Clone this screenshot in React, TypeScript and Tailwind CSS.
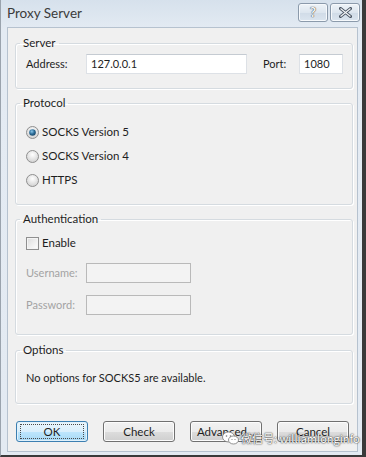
import React from 'react';

// Win7-style "Proxy Server" dialog

const font = "font-['Lato','Open_Sans',sans-serif]";

const Radio = ({ checked }: { checked?: boolean }) => (
    <svg width="13" height="13" viewBox="0 0 13 13" className="shrink-0">
        <defs>
            <radialGradient id="rbg" cx="50%" cy="35%" r="60%">
                <stop offset="0%" stopColor="#ffffff" />
                <stop offset="100%" stopColor="#d4d4d4" />
            </radialGradient>
            <radialGradient id="dot" cx="40%" cy="35%" r="65%">
                <stop offset="0%" stopColor="#8ac6ea" />
                <stop offset="60%" stopColor="#2a6b96" />
                <stop offset="100%" stopColor="#1b4a6c" />
            </radialGradient>
        </defs>
        <circle cx="6.5" cy="6.5" r="6" fill="url(#rbg)" stroke="#8f8f8f" />
        {checked && <circle cx="6.5" cy="6.5" r="3.3" fill="url(#dot)" />}
    </svg>
);

const GroupBox = ({ title, className, children }: { title: string, className?: string, children: React.ReactNode }) => (
    <fieldset className={`mx-0 border border-[#d5dbe0] rounded-[3px] shadow-[inset_1px_1px_0_#ffffff,1px_1px_0_#ffffff] ${className}`}>
        <legend className="ml-[4px] px-[3px] text-[11.5px] leading-[16px] text-[#1e1e1e]">{title}</legend>
        {children}
    </fieldset>
);

const Button = ({ label, focused }: { label: string, focused?: boolean }) => (
    <button
        className={`w-[72px] h-[21px] rounded-[3px] border text-[11.5px] leading-none text-[#1e1e1e] flex items-center justify-center ${
            focused
                ? 'border-[#3c7fb1] bg-[linear-gradient(#eaf6fd,#d9effc_50%,#bee6fd_51%,#a7d9f5)] shadow-[inset_0_0_0_1px_#e0f1fb]'
                : 'border-[#707070] bg-[linear-gradient(#f2f2f2,#ebebeb_50%,#dddddd_51%,#cfcfcf)] shadow-[inset_0_0_0_1px_#fcfcfc]'
        }`}
    >
        {focused ? (
            <span className="w-[64px] h-[15px] border border-dotted border-[#4a4a4a] flex items-center justify-center">{label}</span>
        ) : label}
    </button>
);

const TitleButton = ({ children }: { children: React.ReactNode }) => (
    <div className="w-[30px] h-[19px] rounded-[3px] border border-[#8b9aab] bg-[linear-gradient(#eef3f8,#dde6ef_50%,#d0dbe7_51%,#dbe5ef)] shadow-[inset_0_0_0_1px_#f6f9fc] flex items-center justify-center">
        {children}
    </div>
);

export default function App() {
    return (
        <div className={`w-[366px] h-[457px] relative ${font} bg-[#dfe7f0]`}>
            <div className="w-full h-full flex flex-col border-l border-l-[#9aa3ad] border-r-[4px] border-r-[#3a3a3a] border-b-[2px] border-b-[#3a3a3a] bg-[linear-gradient(#d6e1ec,#e4ebf3_30px,#e3eaf2)]">
                {/* title bar */}
                <div className="h-[27px] shrink-0 flex items-start pl-[6px] pr-[2px]">
                    <span className="mt-[4px] text-[13.5px] leading-[18px] text-[#3b3b3b]">Proxy Server</span>
                    <div className="ml-auto mt-[3px] flex gap-[2px]">
                        <TitleButton>
                            <span className="text-[13px] leading-none font-bold text-[#f4f6f8] [text-shadow:0_0_1px_#404040,0_0_1px_#404040]">?</span>
                        </TitleButton>
                        <TitleButton>
                            <svg width="13" height="11" viewBox="0 0 13 11">
                                <path d="M1.5 1.5 L11.5 9.5 M11.5 1.5 L1.5 9.5" stroke="#4a5563" strokeWidth="3" strokeLinecap="square" />
                                <path d="M1.5 1.5 L11.5 9.5 M11.5 1.5 L1.5 9.5" stroke="#f4f6f8" strokeWidth="1.2" />
                            </svg>
                        </TitleButton>
                    </div>
                </div>

                {/* client area */}
                <div className="flex-1 ml-[6px] mr-[4px] mb-[3px] bg-[#f0f0f0] border border-[#b6c2cf] text-[11px] text-[#1e1e1e] pl-[7px] pr-[4px] flex flex-col">
                    <GroupBox title="Server" className="mt-[7px] pb-[14px]">
                        <div className="pt-[3px] flex items-center">
                            <span className="ml-[10px] w-[60px]">Address:</span>
                            <div className="w-[161px] h-[20px] bg-white border border-[#dde1e6] border-t-[#c5cbd2] flex items-center px-[4px]">127.0.0.1</div>
                            <span className="ml-[16px] w-[36px]">Port:</span>
                            <div className="w-[44px] h-[20px] bg-white border border-[#dde1e6] border-t-[#c5cbd2] flex items-center px-[4px]">1080</div>
                        </div>
                    </GroupBox>

                    <GroupBox title="Protocol" className="mt-[6px] pt-[9px] pb-[12px]">
                        {[['SOCKS Version 5', true], ['SOCKS Version 4', false], ['HTTPS', false]].map(([label, on]) => (
                            <div key={label as string} className="h-[24px] flex items-center pl-[10px] gap-[3px] text-[11.5px]">
                                <Radio checked={on as boolean} />
                                <span>{label}</span>
                            </div>
                        ))}
                    </GroupBox>

                    <GroupBox title="Authentication" className="mt-[6px] pb-[19px]">
                        <div className="pt-[6px] h-[26px] flex items-center pl-[10px] gap-[3px] text-[11.5px]">
                            <div className="w-[13px] h-[13px] border border-[#8f8f8f] bg-[linear-gradient(135deg,#dcdcdc,#ffffff)] shadow-[inset_0_0_0_1px_#f4f4f4]" />
                            <span>Enable</span>
                        </div>
                        <div className="mt-[10px] flex items-center pl-[10px] text-[#a3a3a3]">
                            <span className="w-[60px]">Username:</span>
                            <div className="w-[105px] h-[20px] border border-[#b9b9b9] bg-[#f3f3f3]" />
                        </div>
                        <div className="mt-[12px] flex items-center pl-[10px] text-[#a3a3a3]">
                            <span className="w-[60px]">Password:</span>
                            <div className="w-[105px] h-[20px] border border-[#b9b9b9] bg-[#f3f3f3]" />
                        </div>
                    </GroupBox>

                    <GroupBox title="Options" className="mt-[7px] pt-[12px] pb-[17px]">
                        <div className="pl-[10px] leading-[16px]">No options for SOCKS5 are available.</div>
                    </GroupBox>

                    <div className="mt-[17px] flex items-center pl-[1px] gap-[15px]">
                        <Button label="OK" focused />
                        <Button label="Check" />
                        <Button label="Advanced..." />
                        <Button label="Cancel" />
                    </div>
                </div>
            </div>

            {/* watermark */}
            <div className="absolute left-[222px] top-[431px] flex items-center gap-[2px] text-[11px] leading-none text-white [text-shadow:0_0_2px_#333,0_0_1px_#333]">
                <svg width="17" height="14" viewBox="0 0 17 14">
                    <ellipse cx="6.5" cy="6" rx="6" ry="5" fill="#ffffff" stroke="#777" strokeWidth="0.8" />
                    <ellipse cx="11.5" cy="9" rx="5" ry="4" fill="#ffffff" stroke="#777" strokeWidth="0.8" />
                    <circle cx="4.5" cy="5" r="0.8" fill="#777" />
                    <circle cx="8.5" cy="5" r="0.8" fill="#777" />
                    <circle cx="10" cy="8.5" r="0.6" fill="#777" />
                    <circle cx="13" cy="8.5" r="0.6" fill="#777" />
                </svg>
                <span className="font-['Noto_Sans_CJK_SC','Lato',sans-serif]">微信号: williamlonginfo</span>
            </div>
        </div>
    );
}
